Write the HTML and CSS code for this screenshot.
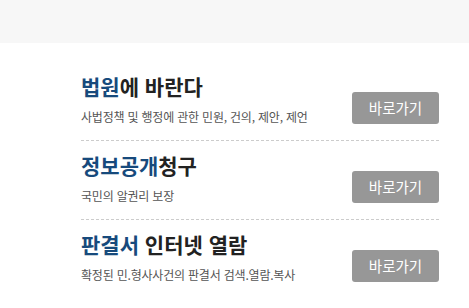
FILE: index.html
```html
<!DOCTYPE html>
<html lang="ko">
  <head>
    <meta charset="UTF-8">
    <meta name="viewport" content="width=device-width, initial-scale=1.0">
    <title>바로가기</title>
    <link rel="stylesheet" href="styles.css">
  </head>
  <body>
    <div class="top-band"></div>
    <ul class="link-list">
      <li class="link-item">
        <div class="link-text">
          <h2 class="link-title"><span class="hl">법원</span>에 바란다</h2>
          <p class="link-desc">사법정책 및 행정에 관한 민원, 건의, 제안, 제언</p>
        </div>
        <a class="go-button" href="#">바로가기</a>
      </li>
      <li class="link-item">
        <div class="link-text">
          <h2 class="link-title"><span class="hl">정보공개</span>청구</h2>
          <p class="link-desc">국민의 알권리 보장</p>
        </div>
        <a class="go-button" href="#">바로가기</a>
      </li>
      <li class="link-item">
        <div class="link-text">
          <h2 class="link-title"><span class="hl">판결서</span> 인터넷 열람</h2>
          <p class="link-desc">확정된 민.형사사건의 판결서 검색.열람.복사</p>
        </div>
        <a class="go-button" href="#">바로가기</a>
      </li>
    </ul>
  </body>
</html>
```

FILE: styles.css
```css
:root {
  --title-blue: #174a7c;
  --text-dark: #222;
  --text-gray: #555;
  --button-gray: #979797;
}

body {
  margin: 0;
  font-family: 'Noto Sans CJK KR', 'Noto Sans', sans-serif;
  background-color: #fff;
}

.top-band {
  height: 43px;
  background-color: #f7f7f7;
}

.link-list {
  list-style: none;
  margin: 19px 0 0 81px;
  padding: 0;
  width: 358px;
}

.link-item {
  display: flex;
  justify-content: space-between;
  align-items: flex-end;
  padding: 12px 0 14px;
  border-bottom: 1px dashed #ccc;
}

.link-item:last-child {
  border-bottom: none;
}

.link-title {
  margin: 0;
  font-size: 21px;
  line-height: 25px;
  font-weight: 700;
  color: var(--text-dark);
}

.link-title .hl {
  color: var(--title-blue);
}

.link-desc {
  margin: 9px 0 0;
  font-size: 12px;
  line-height: 18px;
  color: var(--text-gray);
  letter-spacing: -0.2px;
}

.go-button {
  display: block;
  width: 87px;
  height: 32px;
  margin-bottom: 2px;
  line-height: 32px;
  text-align: center;
  background-color: var(--button-gray);
  color: #fff;
  font-size: 14.5px;
  text-decoration: none;
  border-radius: 3px;
}
```
